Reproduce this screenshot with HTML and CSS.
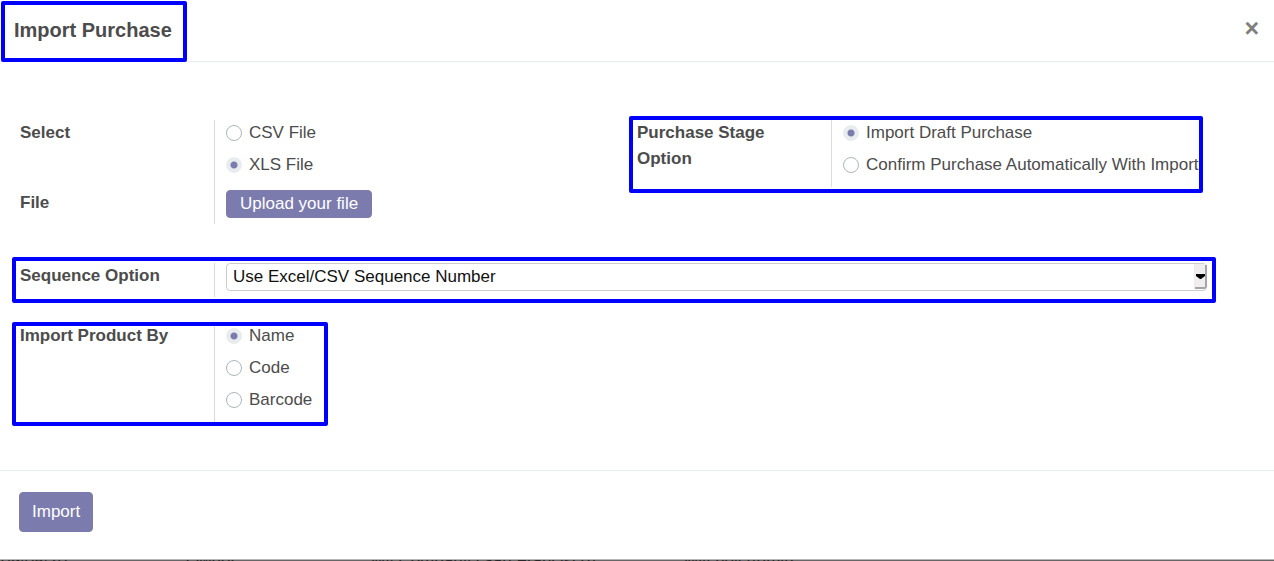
FILE: index.html
```html
<!DOCTYPE html>
<html lang="en">
<head>
<meta charset="utf-8">
<meta name="viewport" content="width=device-width, initial-scale=1">
<title>Import Purchase</title>
<link rel="stylesheet" href="styles.css">
</head>
<body>
<main class="modal">
  <header class="modal-header">
    <h1 class="modal-title marked">Import Purchase</h1>
    <button class="close" type="button" aria-label="Close">×</button>
  </header>
  <form class="modal-form">
    <div class="modal-body">
      <div class="columns">
        <div class="group">
          <div class="label" id="select-label">Select</div>
          <div class="value options spaced" role="radiogroup" aria-labelledby="select-label">
            <label class="option"><input class="radio" type="radio" name="filetype">CSV File</label>
            <label class="option"><input class="radio" type="radio" name="filetype" checked>XLS File</label>
          </div>
          <div class="label">File</div>
          <div class="value file"><button class="button upload" type="button">Upload your file</button></div>
        </div>
        <div class="group stage marked">
          <div class="label" id="stage-label">Purchase Stage Option</div>
          <div class="value options" role="radiogroup" aria-labelledby="stage-label">
            <label class="option"><input class="radio" type="radio" name="stage" checked>Import Draft Purchase</label>
            <label class="option"><input class="radio" type="radio" name="stage">Confirm Purchase Automatically With Import</label>
          </div>
        </div>
      </div>
      <div class="group sequence marked">
        <label class="label" for="sequence">Sequence Option</label>
        <div class="value select-box">
          <select class="select" id="sequence"><option>Use Excel/CSV Sequence Number</option></select>
          <svg class="arrow" viewBox="0 0 13 25" aria-hidden="true"><path fill="#efeded" d="M0 0h13v25H0z"/><path fill="#a5a5a5" d="M11 1h2v22l-2 2H1v-2h10z"/><path fill="#000" d="M2 10h9v2L7 15H6l-4-3z"/></svg>
        </div>
      </div>
      <div class="group product marked">
        <div class="label" id="product-label">Import Product By</div>
        <div class="value options" role="radiogroup" aria-labelledby="product-label">
          <label class="option"><input class="radio" type="radio" name="product" checked>Name</label>
          <label class="option"><input class="radio" type="radio" name="product">Code</label>
          <label class="option"><input class="radio" type="radio" name="product">Barcode</label>
        </div>
      </div>
    </div>
    <footer class="modal-footer"><button class="button import" type="button">Import</button></footer>
  </form>
</main>
<div class="backdrop">
  <div class="record"><span>09/08/20</span><span>Owner</span><span>My Company (San Francisco)</span><span>Mitchell Admin</span></div>
</div>
</body>
</html>
```
FILE: styles.css
```css
* {
  box-sizing: border-box;
}

html,
body {
  margin: 0;
  height: 100%;
}

body {
  display: flex;
  flex-direction: column;
  overflow: hidden;
  background: #fff;
  color: #4c4c4c;
  font: 17px/26px "Liberation Sans", Arial, sans-serif;
}

button,
input,
select {
  margin: 0;
  font: inherit;
}

.modal {
  flex: 1 0 auto;
  display: flex;
  flex-direction: column;
}

.modal-header {
  display: flex;
  align-items: center;
  justify-content: space-between;
  padding-right: 13px;
  border-bottom: 1px solid #e9ecef;
}

.modal-title {
  margin: 0;
  padding: 15px 15px 16px 14px;
  font-size: 20px;
  line-height: 30px;
}

.close {
  padding: 0 2px 6px;
  border: 0;
  background: none;
  color: #7f7f7f;
  font-size: 25px;
  font-weight: bold;
  line-height: 26px;
}

.marked {
  position: relative;
}

.marked::after {
  content: "";
  position: absolute;
  inset: -6px -9px -6px -8px;
  border: 4px solid #00f;
  border-radius: 2px;
  pointer-events: none;
}

.modal-title.marked::after {
  inset: 1px 0 -1px 1px;
}

.modal-form {
  flex: 1;
  display: flex;
  flex-direction: column;
}

.modal-body {
  flex: 1;
  padding: 58px 20px 48px;
}

.columns {
  display: grid;
  grid-template-columns: minmax(0, 1fr) minmax(0, 1fr);
  align-items: start;
  margin-bottom: 39px;
}

.group {
  display: grid;
  grid-template-columns: 194px 1fr;
}

.label {
  padding-right: 40px;
  font-weight: bold;
}

.value {
  padding-left: 11px;
  border-left: 1px solid #ddd;
}

.options {
  display: flex;
  flex-direction: column;
  align-items: flex-start;
  gap: 6px;
  padding-bottom: 9px;
}

.spaced {
  padding-bottom: 12px;
}

.option {
  display: flex;
  align-items: center;
  gap: 7px;
  white-space: nowrap;
}

.radio {
  appearance: none;
  flex: none;
  width: 16px;
  height: 16px;
  border: 1px solid #adb5bd;
  border-radius: 50%;
  background: #fff;
}

.radio:checked {
  border-color: #e9ecef;
  background: radial-gradient(circle, #7c7bad 3px, #e9ecef 4px);
}

.stage {
  grid-template-columns: 194px minmax(0, 1fr);
  margin-right: 59px;
}

.stage.marked::after {
  inset: -4px -8px -6px;
}

.file {
  padding-bottom: 6px;
}

.button {
  border: 1px solid #7c7bad;
  border-radius: 4px;
  background: #7c7bad;
  color: #fff;
}

.upload {
  display: block;
  padding: 0 13px;
}

.sequence {
  margin: 0 47px 26px 0;
}

.select-box {
  position: relative;
  padding-bottom: 6px;
}

.select {
  appearance: none;
  display: block;
  width: 100%;
  height: 28px;
  padding: 0 20px 0 6px;
  border: 1px solid #ccc;
  border-radius: 4px;
  background: #fff;
  color: #111;
}

.arrow {
  position: absolute;
  top: 1px;
  right: 0;
  width: 13px;
  height: 25px;
  pointer-events: none;
}

.product {
  width: fit-content;
}

.product.marked::after {
  inset: -1px -16px -4px -8px;
}

.modal-footer {
  padding: 21px 19px 27px;
  border-top: 1px solid #e9ecef;
}

.import {
  display: block;
  padding: 6px 12px;
}

.backdrop {
  flex: none;
  height: 2px;
  overflow: hidden;
  border-top: 1px solid #b5b5b5;
  background: #666;
  color: #262626;
}

.record {
  display: grid;
  grid-template-columns: 185px 185px 313px 1fr;
  margin: -12px 0 0 1px;
}
```
